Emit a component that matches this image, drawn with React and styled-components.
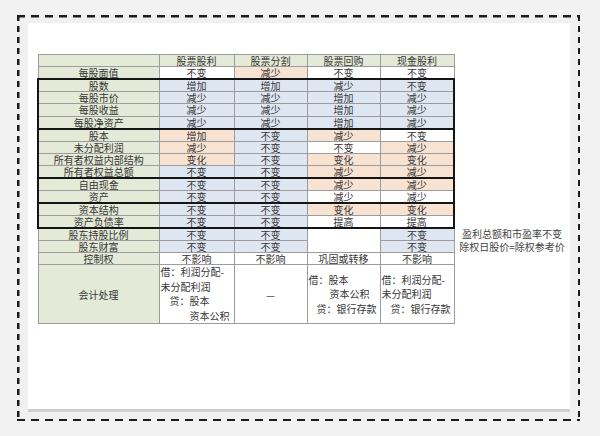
import styled, { createGlobalStyle } from 'styled-components';

const GlobalStyle = createGlobalStyle`
  html, body {
    margin: 0;
    padding: 0;
    background: #f2f2f2;
  }
  body {
    font-family: "Noto Sans CJK SC", "Noto Sans", sans-serif;
    color: #363636;
  }
`;

const tones = {
  w: '#ffffff',
  g: '#e4ead7',
  b: '#dde6f1',
  p: '#f8e2d2',
};

const Frame = styled.div`
  box-sizing: border-box;
  width: 563px;
  height: 406px;
  margin: 15px 0 0 17px;
  padding: 8px 10px 9px 10.5px;
  background-color: #f0f0f0;
  background-image:
    repeating-linear-gradient(90deg, #1c1c1c 0 8px, transparent 8px 14px),
    repeating-linear-gradient(90deg, #1c1c1c 0 8px, transparent 8px 14px),
    repeating-linear-gradient(180deg, #1c1c1c 0 6px, transparent 6px 11px),
    repeating-linear-gradient(180deg, #1c1c1c 0 6px, transparent 6px 11px);
  background-size: 100% 2.5px, 100% 2.5px, 2.5px 100%, 2.5px 100%;
  background-position: top left, bottom left, top left, top right;
  background-repeat: no-repeat;
`;

const Card = styled.div`
  box-sizing: border-box;
  height: 100%;
  background: #fff;
  border-bottom: 3px solid #cfcfcf;
  padding: 31px 0 0 9.5px;
  display: flex;
  align-items: flex-start;
`;

const Table = styled.table`
  border-collapse: collapse;
  table-layout: fixed;
  width: 416px;
  font-size: 10px;
  line-height: 11px;
  border: 1px solid #8a8a8a;
`;

const Box = styled.tbody`
  border: 2px solid #151515;
`;

const Row = styled.tr`
  height: ${(p) => p.$h || 12.2}px;
`;

const Cell = styled.td`
  border: 1px solid #9c9c9c;
  padding: 0;
  text-align: center;
  vertical-align: middle;
  white-space: nowrap;
  overflow: hidden;
  background: ${(p) => tones[p.$tone || 'w']};
`;

const EntryCell = styled(Cell)`
  text-align: left;
  padding-left: 1px;
  line-height: 14.5px;
`;

const Line = styled.div`
  padding-left: ${(p) => p.$indent || 0}px;
`;

const Dash = styled.div`
  text-align: center;
  color: #555;
`;

const Note = styled.div`
  margin: 173px 0 0 2px;
  width: 110px;
  text-align: center;
  font-size: 10px;
  line-height: 13px;
  color: #444;
  white-space: nowrap;
`;

const heads = ['股票股利', '股票分割', '股票回购', '现金股利'];

const groups = [
  {
    box: false,
    rows: [['每股面值', ['不变', 'w'], ['减少', 'p'], ['不变', 'w'], ['不变', 'w']]],
  },
  {
    box: true,
    rows: [
      ['股数', ['增加', 'b'], ['增加', 'b'], ['减少', 'b'], ['不变', 'b']],
      ['每股市价', ['减少', 'b'], ['减少', 'b'], ['增加', 'b'], ['减少', 'b']],
      ['每股收益', ['减少', 'b'], ['减少', 'b'], ['增加', 'b'], ['减少', 'b']],
      ['每股净资产', ['减少', 'b'], ['减少', 'b'], ['增加', 'b'], ['减少', 'b']],
    ],
  },
  {
    box: true,
    rows: [
      ['股本', ['增加', 'p'], ['不变', 'b'], ['减少', 'p'], ['不变', 'w']],
      ['未分配利润', ['减少', 'p'], ['不变', 'b'], ['不变', 'w'], ['减少', 'p']],
      ['所有者权益内部结构', ['变化', 'p'], ['不变', 'b'], ['变化', 'p'], ['变化', 'p']],
      ['所有者权益总额', ['不变', 'b'], ['不变', 'b'], ['减少', 'p'], ['减少', 'p']],
    ],
  },
  {
    box: true,
    rows: [
      ['自由现金', ['不变', 'b'], ['不变', 'b'], ['减少', 'p'], ['减少', 'p']],
      ['资产', ['不变', 'b'], ['不变', 'b'], ['减少', 'w'], ['减少', 'w']],
    ],
  },
  {
    box: true,
    rows: [
      ['资本结构', ['不变', 'b'], ['不变', 'b'], ['变化', 'p'], ['变化', 'p']],
      ['资产负债率', ['不变', 'b'], ['不变', 'b'], ['提高', 'w'], ['提高', 'w']],
    ],
  },
];

const entries = [
  [
    ['借：利润分配-', 0],
    ['未分配利润', 0],
    ['贷：股本', 9],
    ['资本公积', 29],
  ],
  null,
  [
    ['借：股本', 0],
    ['资本公积', 21],
    ['贷：银行存款', 8],
  ],
  [
    ['借：利润分配-', 0],
    ['未分配利润', 0],
    ['贷：银行存款', 9],
  ],
];

const DataRow = ({ row }) => {
  const [label, ...cells] = row;
  return (
    <Row>
      <Cell $tone="g">{label}</Cell>
      {cells.map(([text, tone], i) => (
        <Cell key={i} $tone={tone}>
          {text}
        </Cell>
      ))}
    </Row>
  );
};

const App = () => {
  return (
    <>
      <GlobalStyle />
      <Frame>
        <Card>
          <Table>
            <colgroup>
              <col style={{ width: 121 }} />
              <col style={{ width: 75 }} />
              <col style={{ width: 73 }} />
              <col style={{ width: 73 }} />
              <col style={{ width: 74 }} />
            </colgroup>
            <thead>
              <Row>
                <Cell $tone="g" />
                {heads.map((h) => (
                  <Cell key={h} $tone="g">
                    {h}
                  </Cell>
                ))}
              </Row>
            </thead>
            {groups.map((group, gi) => {
              const Body = group.box ? Box : 'tbody';
              return (
                <Body key={gi}>
                  {group.rows.map((row) => (
                    <DataRow key={row[0]} row={row} />
                  ))}
                </Body>
              );
            })}
            <tbody>
              <Row>
                <Cell $tone="g">股东持股比例</Cell>
                <Cell $tone="b">不变</Cell>
                <Cell $tone="b">不变</Cell>
                <Cell $tone="w" rowSpan={2} />
                <Cell $tone="b">不变</Cell>
              </Row>
              <Row>
                <Cell $tone="g">股东财富</Cell>
                <Cell $tone="b">不变</Cell>
                <Cell $tone="b">不变</Cell>
                <Cell $tone="b">不变</Cell>
              </Row>
              <Row>
                <Cell $tone="g">控制权</Cell>
                <Cell>不影响</Cell>
                <Cell>不影响</Cell>
                <Cell>巩固或转移</Cell>
                <Cell>不影响</Cell>
              </Row>
              <Row $h={58}>
                <Cell $tone="g">会计处理</Cell>
                {entries.map((lines, i) =>
                  lines ? (
                    <EntryCell key={i}>
                      {lines.map(([text, indent]) => (
                        <Line key={text} $indent={indent}>
                          {text}
                        </Line>
                      ))}
                    </EntryCell>
                  ) : (
                    <Cell key={i}>
                      <Dash>—</Dash>
                    </Cell>
                  )
                )}
              </Row>
            </tbody>
          </Table>
          <Note>
            <div>盈利总额和市盈率不变</div>
            <div>除权日股价=除权参考价</div>
          </Note>
        </Card>
      </Frame>
    </>
  );
};

export default App;
